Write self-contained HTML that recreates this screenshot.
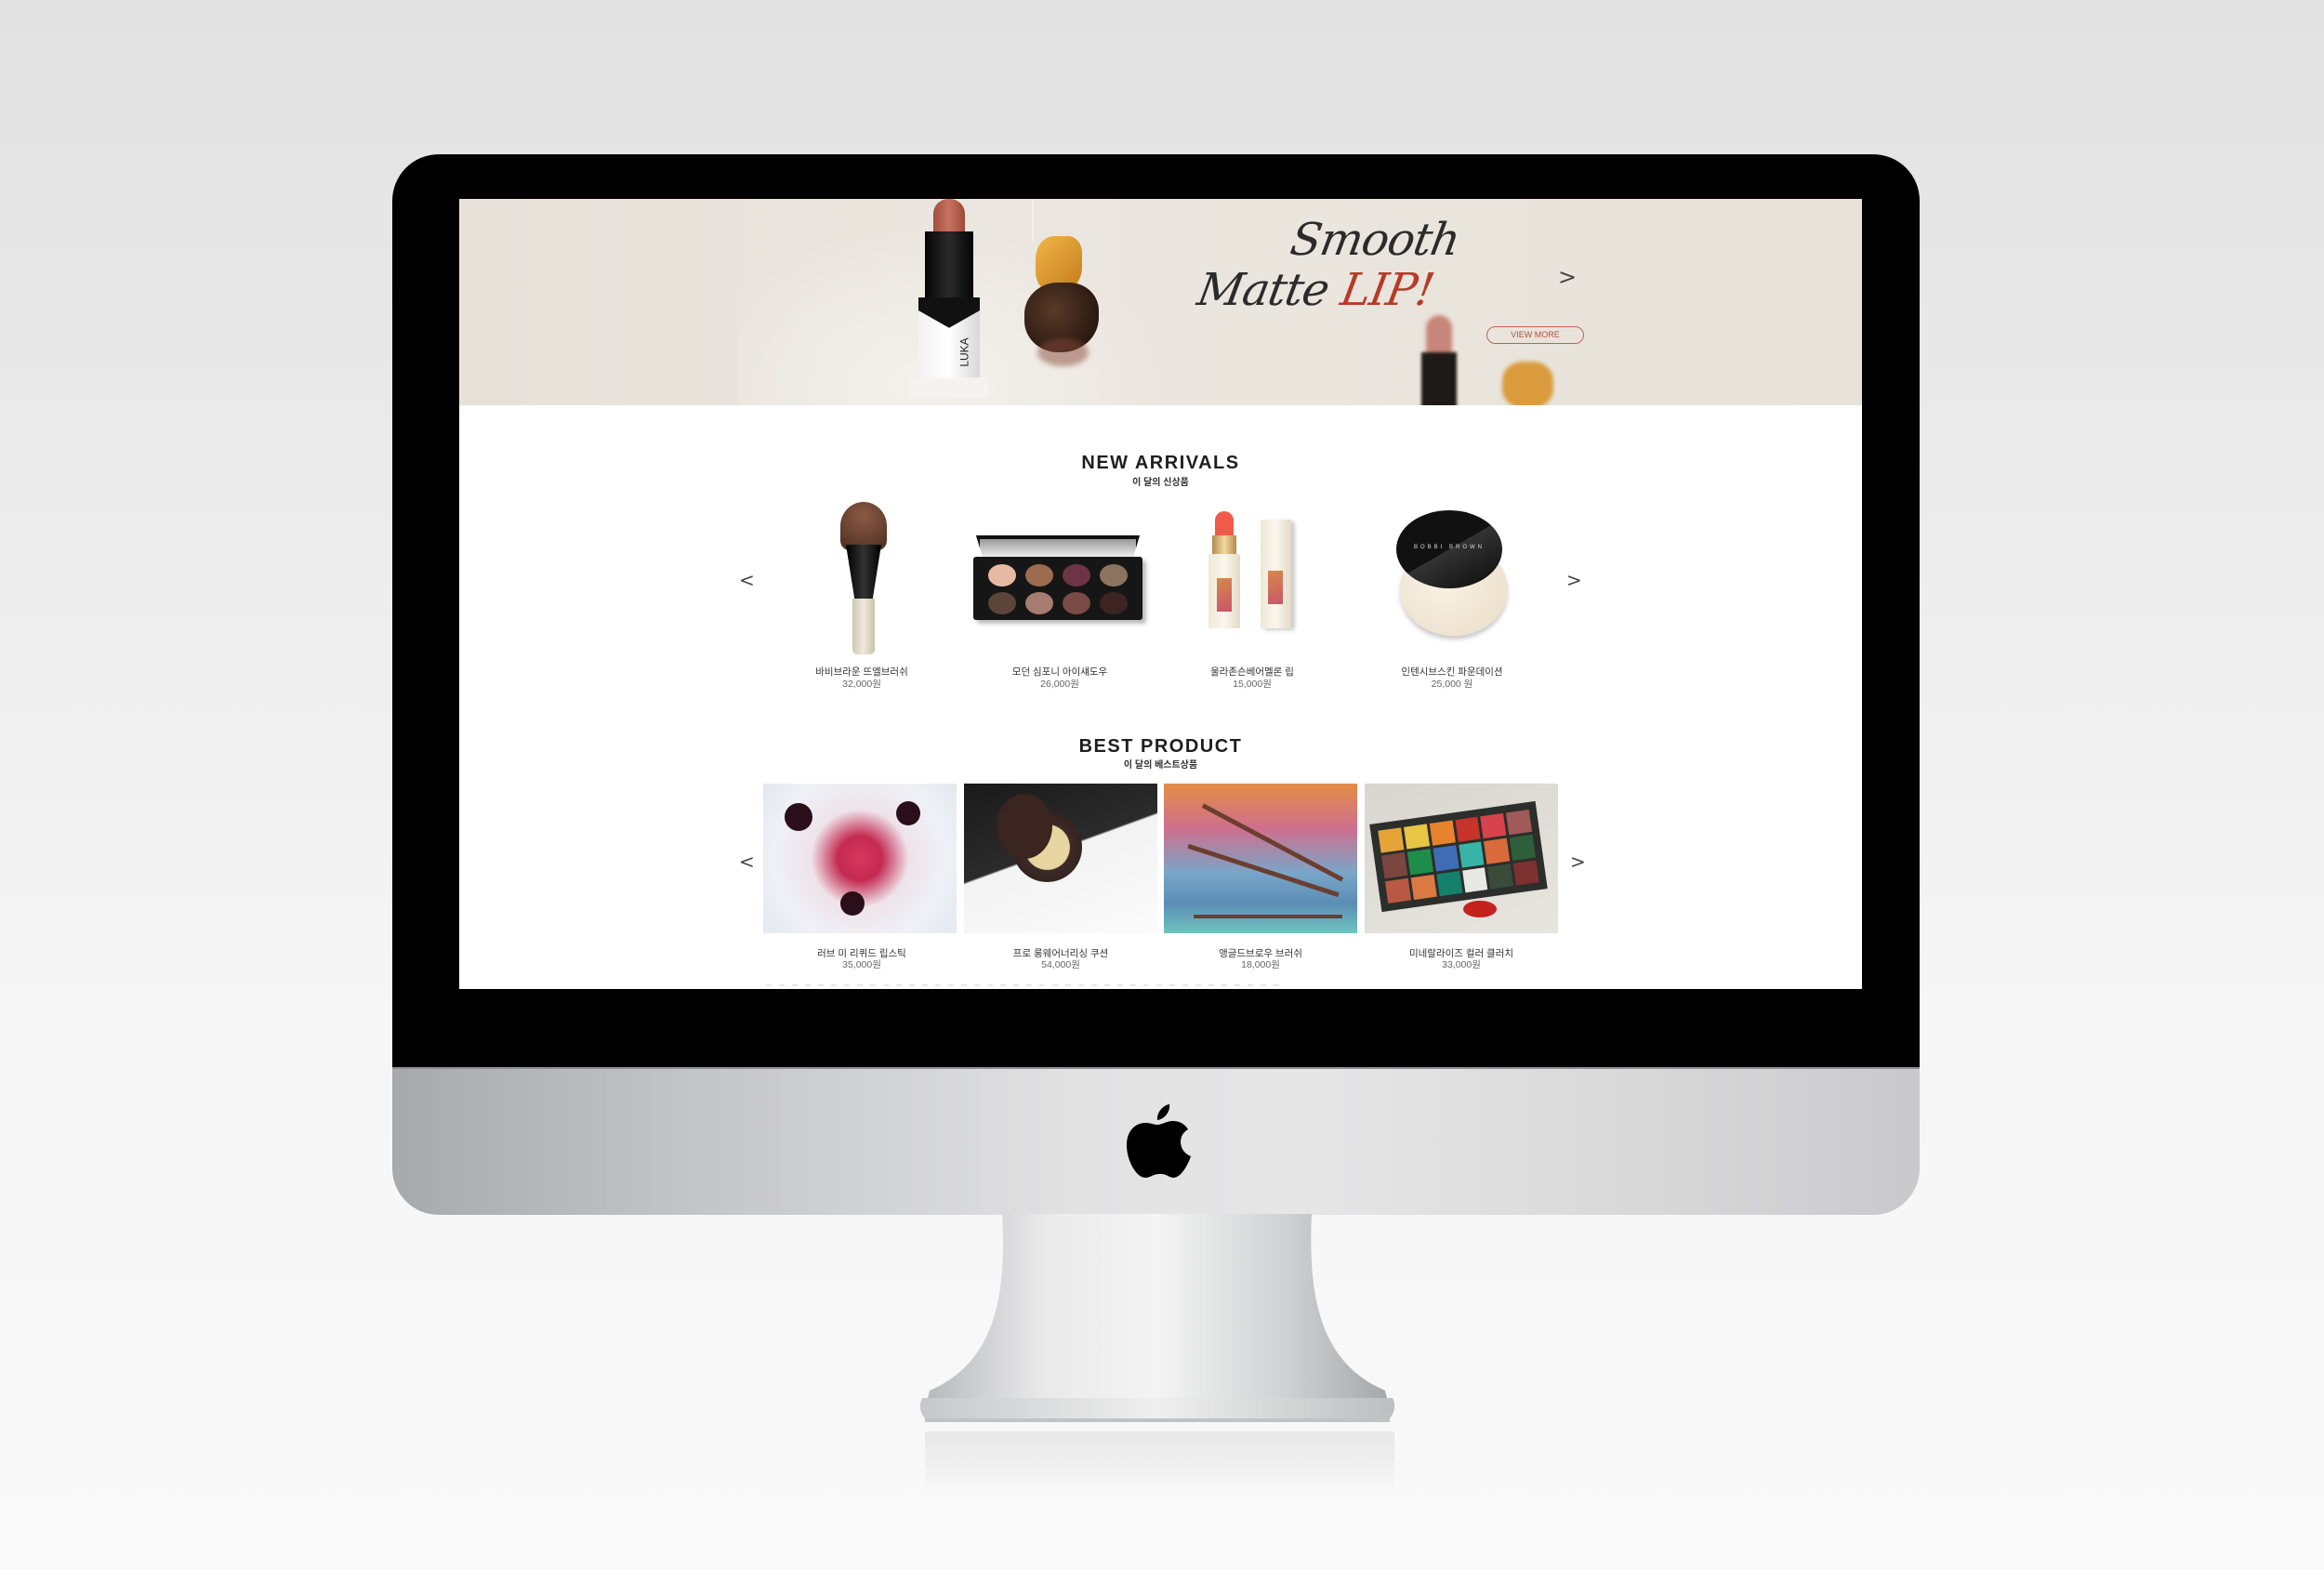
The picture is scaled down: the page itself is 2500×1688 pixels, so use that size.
<!DOCTYPE html>
<html><head><meta charset="utf-8"><style>
*{margin:0;padding:0;box-sizing:border-box}
body{width:2500px;height:1688px;overflow:hidden;position:relative;background:linear-gradient(180deg,#e2e2e2 0%,#ececec 35%,#f6f6f6 65%,#f9f9f9 100%);font-family:"Liberation Sans","Noto Sans CJK KR",sans-serif}
.a{position:absolute}
.bezel{left:422px;top:166px;width:1643px;height:982px;background:#000;border-radius:50px 50px 0 0}
.chin{left:422px;top:1148px;width:1643px;height:159px;border-radius:0 0 50px 50px;background:linear-gradient(90deg,#a8a9ab 0%,#c4c5c7 20%,#e2e2e3 45%,#e6e6e7 60%,#d6d6d7 85%,#c9c9cb 100%);border-top:2px solid #8e8e90}
.screen{left:494px;top:214px;width:1509px;height:850px;background:#fff;overflow:hidden}
.banner{left:0;top:0;width:1509px;height:222px;background:linear-gradient(90deg,#e6e2da 0%,#ebe7e0 40%,#e9e5dd 70%,#e7e3db 100%);overflow:hidden}
.t{text-align:center;color:#222}
.h{font-weight:bold;font-size:20px;letter-spacing:1.5px;font-family:"Liberation Sans",sans-serif;color:#1e1e1e}
.sub{font-size:10px;font-weight:bold;color:#333}
.nm{font-size:10.5px;color:#333;width:200px}
.pr{font-size:10.5px;color:#666;width:200px}
.arr{font-size:20px;color:#444;font-family:"DejaVu Sans",sans-serif}
</style></head><body>
<div class="a bezel"></div>
<div class="a chin"></div>
<svg class="a" style="left:1208px;top:1186px" width="74" height="90" viewBox="0 0 74 90">
<path d="M50 2c1 8-5 16-13 17-1-8 6-16 13-17z" fill="#000"/>
<path d="M37 24c5 0 10-4 17-4 5 0 12 2 16 9-12 7-10 24 3 29-3 9-10 22-18 23-6 0-7-4-15-4s-10 4-16 4C14 81 4 62 4 46 4 30 14 22 24 22c6 0 9 2 13 2z" fill="#000"/>
</svg>
<svg class="a" style="left:980px;top:1306px" width="530" height="240" viewBox="0 0 530 240">
<defs><linearGradient id="sg" x1="0" x2="1"><stop offset="0" stop-color="#b9babc"/><stop offset=".25" stop-color="#e9e9ea"/><stop offset=".5" stop-color="#f4f4f4"/><stop offset=".78" stop-color="#d0d1d2"/><stop offset="1" stop-color="#a7a8aa"/></linearGradient>
<linearGradient id="bg2" x1="0" x2="1"><stop offset="0" stop-color="#c7c8ca"/><stop offset=".5" stop-color="#efefef"/><stop offset="1" stop-color="#bdbebf"/></linearGradient></defs>
<path d="M98 0H431C427 90 440 160 510 190L512 198H18L20 190C90 160 103 90 98 0Z" fill="url(#sg)"/>
<path d="M12 198H518C522 206 520 214 515 220H15C10 214 8 206 12 198Z" fill="url(#bg2)"/>
<rect x="15" y="220" width="500" height="4" fill="#9d9ea0" opacity=".6"/>
</svg>
<div class="a" style="left:995px;top:1540px;width:505px;height:70px;background:linear-gradient(180deg,rgba(200,200,202,.35),rgba(240,240,240,0))"></div>

<div class="a screen">
 <div class="a banner">
  <div class="a" style="left:300px;top:0;width:500px;height:222px;background:radial-gradient(ellipse at 40% 90%,#f4f1ec 0%,rgba(240,236,230,0) 60%)"></div>
  <div class="a" style="left:510px;top:0;width:34px;height:60px;background:linear-gradient(90deg,#a24e3d,#c87262,#9e4938);border-radius:16px 16px 0 0"></div>
  <div class="a" style="left:501px;top:35px;width:52px;height:75px;background:linear-gradient(90deg,#050505,#2a2a2a,#050505)"></div>
  <div class="a" style="left:494px;top:106px;width:66px;height:40px;background:#111;clip-path:polygon(0 0,100% 0,100% 70%,50% 100%,0 70%)"></div>
  <div class="a" style="left:494px;top:120px;width:66px;height:75px;background:linear-gradient(90deg,#f2f2f2,#fff,#d8d8d8);clip-path:polygon(0 0,50% 25%,100% 0,100% 100%,0 100%)"></div>
  <div class="a" style="left:528px;top:158px;font-size:12px;color:#222;transform:rotate(-90deg)">LUKA</div>
  <div class="a" style="left:484px;top:192px;width:85px;height:22px;background:#f4f4f2;opacity:.8"></div>
  <div class="a" style="left:616px;top:0;width:2px;height:45px;background:#f4efe5"></div>
  <div class="a" style="left:620px;top:40px;width:50px;height:60px;background:linear-gradient(135deg,#f0b748,#c47a1b);border-radius:40% 30% 45% 35%"></div>
  <div class="a" style="left:608px;top:90px;width:80px;height:75px;background:radial-gradient(circle at 40% 40%,#5a3a28,#2b1a12 70%);border-radius:45% 40% 50% 45%"></div>
  <div class="a" style="left:622px;top:150px;width:55px;height:30px;background:#8a4a3a;opacity:.5;border-radius:50%;filter:blur(3px)"></div>
  <div class="a" style="left:895px;top:16px;font-family:'DejaVu Serif',serif;font-style:italic;font-size:48px;color:#2b2b2b;letter-spacing:-1px;transform:skewX(-10deg)">Smooth</div>
  <div class="a" style="left:795px;top:70px;font-family:'DejaVu Serif',serif;font-style:italic;font-size:48px;color:#2b2b2b;letter-spacing:-1px;transform:skewX(-10deg)">Matte <span style="color:#b73a28">LIP!</span></div>
  <div class="a arr" style="left:1182px;top:70px;font-size:24px;color:#444">&gt;</div>
  <div class="a" style="left:1105px;top:137px;width:105px;height:19px;border:1.5px solid #c4614e;border-radius:10px;font-size:9px;color:#b2503d;text-align:center;line-height:16px">VIEW MORE</div>
  <div class="a" style="left:1040px;top:125px;width:28px;height:45px;background:#c8867a;border-radius:14px 14px 0 0;filter:blur(2px)"></div>
  <div class="a" style="left:1035px;top:165px;width:38px;height:60px;background:#1d1a18;filter:blur(1.5px)"></div>
  <div class="a" style="left:1122px;top:175px;width:55px;height:50px;background:#d99b3c;border-radius:40%;filter:blur(2px)"></div>
 </div>

 <div class="a t h" style="left:0;width:1509px;top:273px">NEW ARRIVALS</div>
 <div class="a t sub" style="left:0;width:1509px;top:296px">이 달의 신상품</div>
 <div class="a arr" style="left:301px;top:398px">&lt;</div>
 <div class="a arr" style="left:1191px;top:398px">&gt;</div>

 <!-- brush -->
 <div class="a" style="left:410px;top:326px;width:50px;height:52px;background:radial-gradient(circle at 50% 30%,#8a5a44,#4a2e22);border-radius:50% 50% 20% 20%"></div>
 <div class="a" style="left:416px;top:372px;width:38px;height:60px;background:linear-gradient(90deg,#000,#333,#000);clip-path:polygon(0 0,100% 0,75% 100%,25% 100%)"></div>
 <div class="a" style="left:423px;top:430px;width:24px;height:60px;background:linear-gradient(90deg,#cfc8b4,#efe9da,#c9c1ab);border-radius:0 0 5px 5px"></div>
 <!-- palette -->
 <div class="a" style="left:556px;top:362px;width:176px;height:24px;background:linear-gradient(180deg,#999,#f0f0f0);border:4px solid #111;border-bottom:0;clip-path:polygon(0 0,100% 0,96% 100%,4% 100%)"></div>
 <div class="a" style="left:553px;top:385px;width:182px;height:68px;background:#161616;border-radius:3px;box-shadow:4px 4px 4px #bbb"></div>
 <div class="a" style="left:563px;top:391px;width:162px;height:58px;display:grid;grid-template-columns:repeat(4,1fr);grid-template-rows:1fr 1fr;gap:6px 10px;padding:2px 6px">
  <span style="background:#e6b9a2;border-radius:50%"></span><span style="background:#9c6c4f;border-radius:50%"></span><span style="background:#6d3446;border-radius:50%"></span><span style="background:#8b7360;border-radius:50%"></span>
  <span style="background:#5a4538;border-radius:50%"></span><span style="background:#a67c71;border-radius:50%"></span><span style="background:#7a4a44;border-radius:50%"></span><span style="background:#3d2422;border-radius:50%"></span>
 </div>
 <!-- lipsticks -->
 <div class="a" style="left:813px;top:336px;width:20px;height:30px;background:#ef5a4a;border-radius:10px 10px 0 0"></div>
 <div class="a" style="left:810px;top:362px;width:26px;height:22px;background:linear-gradient(90deg,#b48a4c,#f0d9a2,#b48a4c)"></div>
 <div class="a" style="left:806px;top:382px;width:34px;height:80px;background:linear-gradient(90deg,#eee8d8,#fbf7ee,#e2dac6);border-radius:2px"></div>
 <div class="a" style="left:862px;top:345px;width:33px;height:117px;background:linear-gradient(90deg,#eee8d8,#fbf7ee,#e2dac6);border-radius:2px;box-shadow:4px 2px 4px #ccc"></div>
 <div class="a" style="left:815px;top:408px;width:16px;height:36px;background:linear-gradient(160deg,#d6884a,#c9566a)"></div>
 <div class="a" style="left:870px;top:400px;width:16px;height:36px;background:linear-gradient(160deg,#d6884a,#c9566a)"></div>
 <!-- powder -->
 <div class="a" style="left:1012px;top:370px;width:116px;height:100px;border-radius:50%;background:radial-gradient(circle at 40% 35%,#fbf3e6,#e9dcc8);box-shadow:0 4px 5px #ccc"></div>
 <div class="a" style="left:1008px;top:335px;width:114px;height:84px;border-radius:50%;background:linear-gradient(150deg,#111 50%,#333 50%,#0a0a0a);"></div>
 <div class="a" style="left:1008px;top:372px;width:114px;font-size:6px;color:#ddd;text-align:center;letter-spacing:3px">BOBBI BROWN</div>

 <div class="a t nm" style="left:333px;top:501px">바비브라운 뜨엘브러쉬</div>
 <div class="a t pr" style="left:333px;top:514px">32,000원</div>
 <div class="a t nm" style="left:546px;top:501px">모던 심포니 아이섀도우</div>
 <div class="a t pr" style="left:546px;top:514px">26,000원</div>
 <div class="a t nm" style="left:753px;top:501px">울라존슨베어멜론 립</div>
 <div class="a t pr" style="left:753px;top:514px">15,000원</div>
 <div class="a t nm" style="left:968px;top:501px">인텐시브스킨 파운데이션</div>
 <div class="a t pr" style="left:968px;top:514px">25,000 원</div>

 <div class="a t h" style="left:0;width:1509px;top:578px">BEST PRODUCT</div>
 <div class="a t sub" style="left:0;width:1509px;top:600px">이 달의 베스트상품</div>
 <div class="a arr" style="left:301px;top:701px">&lt;</div>
 <div class="a arr" style="left:1195px;top:701px">&gt;</div>

 <div class="a" style="left:327px;top:629px;width:208px;height:161px;background:radial-gradient(circle at 50% 50%,#d9365d 0%,#c42a52 18%,#efe3ea 40%,#eef1f6 70%,#e3e8ef 100%)"></div>
 <div class="a" style="left:350px;top:650px;width:30px;height:30px;border-radius:50%;background:#2a0e1a"></div>
 <div class="a" style="left:470px;top:648px;width:26px;height:26px;border-radius:50%;background:#2a0e1a"></div>
 <div class="a" style="left:410px;top:745px;width:26px;height:26px;border-radius:50%;background:#2a0e1a"></div>
 <div class="a" style="left:543px;top:629px;width:208px;height:161px;background:linear-gradient(160deg,#1a1a1a 0%,#2b2b2b 45%,#f3f3f3 46%,#fbfbfb 100%)"></div>
 <div class="a" style="left:595px;top:660px;width:75px;height:75px;border-radius:50%;background:radial-gradient(circle,#e8d6a0 45%,#3c2a26 47%,#2a1a17)"></div>
 <div class="a" style="left:578px;top:640px;width:60px;height:70px;border-radius:50%;background:#3a2520"></div>
 <div class="a" style="left:758px;top:629px;width:208px;height:161px;background:linear-gradient(180deg,#e48d45 0%,#cf6f8d 30%,#79a6c8 60%,#5b8db5 80%,#6fc2bf 100%)"></div>
 <div class="a" style="left:790px;top:690px;width:170px;height:5px;background:#6b3e30;transform:rotate(28deg)"></div>
 <div class="a" style="left:780px;top:720px;width:170px;height:5px;background:#6b3e30;transform:rotate(18deg)"></div>
 <div class="a" style="left:790px;top:770px;width:160px;height:4px;background:#6b3e30"></div>
 <div class="a" style="left:974px;top:629px;width:208px;height:161px;background:linear-gradient(160deg,#d9d5cf,#e8e4de)"></div>
 <div class="a" style="left:985px;top:660px;width:180px;height:95px;background:#2b2e2b;transform:rotate(-8deg);display:grid;grid-template-columns:repeat(6,1fr);gap:3px;padding:8px">
  <span style="background:#e5a438"></span><span style="background:#e8c542"></span><span style="background:#e7822d"></span><span style="background:#c8332a"></span><span style="background:#d8424c"></span><span style="background:#a05a58"></span>
  <span style="background:#7b4640"></span><span style="background:#1f8d4a"></span><span style="background:#3e6db5"></span><span style="background:#39b3a8"></span><span style="background:#d86a3b"></span><span style="background:#2e5e3a"></span>
  <span style="background:#b85845"></span><span style="background:#da7a42"></span><span style="background:#15806c"></span><span style="background:#e8e8e4"></span><span style="background:#3a4b3a"></span><span style="background:#7e2f2f"></span>
 </div>
 <div class="a" style="left:1080px;top:755px;width:36px;height:18px;border-radius:50%;background:#c3221f"></div>

 <div class="a t nm" style="left:333px;top:804px">러브 미 리퀴드 립스틱</div>
 <div class="a t pr" style="left:333px;top:816px">35,000원</div>
 <div class="a t nm" style="left:547px;top:804px">프로 롱웨어너리싱 쿠션</div>
 <div class="a t pr" style="left:547px;top:816px">54,000원</div>
 <div class="a t nm" style="left:762px;top:804px">앵글드브로우 브러쉬</div>
 <div class="a t pr" style="left:762px;top:816px">18,000원</div>
 <div class="a t nm" style="left:978px;top:804px">미네랄라이즈 컬러 클러치</div>
 <div class="a t pr" style="left:978px;top:816px">33,000원</div>
 <div class="a" style="left:330px;top:845px;width:560px;height:2px;background:repeating-linear-gradient(90deg,#ccc 0 6px,transparent 6px 14px);opacity:.5"></div>
</div>
</body></html>
